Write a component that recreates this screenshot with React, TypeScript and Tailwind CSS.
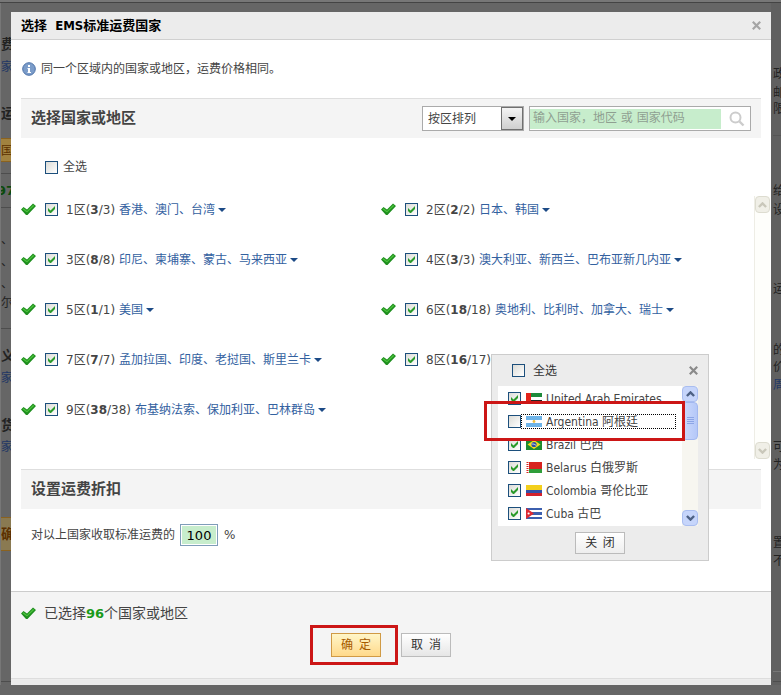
import type { ReactNode } from "react";

type Zone = {
  id: number;
  picked: number;
  total: number;
  names: string;
};

const zones: Zone[] = [
  { id: 1, picked: 3, total: 3, names: "香港、澳门、台湾" },
  { id: 2, picked: 2, total: 2, names: "日本、韩国" },
  { id: 3, picked: 8, total: 8, names: "印尼、柬埔寨、蒙古、马来西亚" },
  { id: 4, picked: 3, total: 3, names: "澳大利亚、新西兰、巴布亚新几内亚" },
  { id: 5, picked: 1, total: 1, names: "美国" },
  { id: 6, picked: 18, total: 18, names: "奥地利、比利时、加拿大、瑞士" },
  { id: 7, picked: 7, total: 7, names: "孟加拉国、印度、老挝国、斯里兰卡" },
  { id: 8, picked: 16, total: 17, names: "" },
  { id: 9, picked: 38, total: 38, names: "布基纳法索、保加利亚、巴林群岛" },
];

const flags: Record<string, ReactNode> = {
  ae: (
    <>
      <path fill="#fff" d="M0 0h16v11H0z" />
      <path fill="#1f8a3b" d="M0 0h16v4H0z" />
      <path fill="#222" d="M0 7h16v4H0z" />
      <path fill="#e2231a" d="M0 0h5v11H0z" />
    </>
  ),
  ar: (
    <>
      <path fill="#6fb4e8" d="M0 0h16v11H0z" />
      <path fill="#fff" d="M0 4h16v3H0z" />
      <circle cx="8" cy="5.5" r="1.4" fill="#f0c040" />
    </>
  ),
  br: (
    <>
      <path fill="#1d8a2f" d="M0 0h16v11H0z" />
      <path fill="#f5dc1e" d="m8 1 6.500 4.500L8 10 1.500 5.500z" />
      <circle cx="8" cy="5.500" r="2.600" fill="#2b4fa3" />
      <path stroke="#fff" strokeWidth=".7" fill="none" d="M5.600 5q2.600-.4 4.600 1.400" />
    </>
  ),
  by: (
    <>
      <path fill="#d8231f" d="M0 0h16v11H0z" />
      <path fill="#2f9e3a" d="M0 7h16v4H0z" />
      <path fill="#fff" d="M0 0h3v11H0z" />
      <path stroke="#d8231f" strokeWidth="2" strokeDasharray="1 1" d="M1.500 0v11" />
    </>
  ),
  co: (
    <>
      <path fill="#f3cf1c" d="M0 0h16v5H0z" />
      <path fill="#3351a8" d="M0 5h16v3H0z" />
      <path fill="#d3212c" d="M0 8h16v3H0z" />
    </>
  ),
  cu: (
    <>
      <path fill="#3c5fae" d="M0 0h16v11H0z" />
      <path fill="#fff" d="M0 2h16v2H0zM0 7h16v2H0z" />
      <path fill="#dd2a33" d="m0 0 8 5.500L0 11z" />
      <circle cx="2.600" cy="5.500" r="1.100" fill="#fff" />
    </>
  ),
};

const countries = [
  { code: "ae", name: "United Arab Emirates", checked: true },
  { code: "ar", name: "Argentina 阿根廷", checked: false },
  { code: "br", name: "Brazil 巴西", checked: true },
  { code: "by", name: "Belarus 白俄罗斯", checked: true },
  { code: "co", name: "Colombia 哥伦比亚", checked: true },
  { code: "cu", name: "Cuba 古巴", checked: true },
];

const CheckBox = ({ id, checked = false }: { id: string; checked?: boolean }) => (
  <span className="grid h-[13px] w-[13px] shrink-0">
    <input
      id={id}
      type="checkbox"
      defaultChecked={checked}
      className="peer col-start-1 row-start-1 h-[13px] w-[13px] appearance-none border border-[#1c4f7c] bg-linear-to-br from-[#dcdcd7] to-white"
    />
    <svg
      viewBox="0 0 13 13"
      className="pointer-events-none invisible col-start-1 row-start-1 h-[13px] w-[13px] peer-checked:visible"
    >
      <path fill="#2a9a2a" d="M3 5v3l2 2h1l4-4V3L5.500 7.500z" />
    </svg>
  </span>
);

const Tick = () => (
  <svg viewBox="0 0 15 13" className="h-[13px] w-[15px] shrink-0">
    <path fill="#1f8f1f" d="M0 6.500 2.500 4 6 6.500 12 .5 15 3 6.500 12 5 12z" />
    <path fill="#4cc23c" d="M1.500 6.200 2.600 5.200 6 8 12 2l1.300.8L6 9.600z" />
  </svg>
);

const Caret = ({ className }: { className: string }) => (
  <svg viewBox="0 0 8 4" className={`h-1 w-2 ${className}`}>
    <path fill="currentColor" d="M0 0h8L4 4z" />
  </svg>
);

const CloseIcon = ({ className }: { className: string }) => (
  <svg viewBox="0 0 9 9" className={`h-[9px] w-[9px] ${className}`}>
    <path stroke="currentColor" strokeWidth="2.200" d="m.8.8 7.400 7.400M8.200.8.8 8.200" />
  </svg>
);

const Chevron = ({ className }: { className: string }) => (
  <svg viewBox="0 0 9 6" className={`h-[6px] w-[9px] ${className}`}>
    <path stroke="currentColor" strokeWidth="2.400" fill="none" d="m.9 5 3.600-3.600L8.100 5" />
  </svg>
);

const SectionTitle = ({ title, children }: { title: string; children?: ReactNode }) => (
  <div className="mx-2.5 flex h-10 items-center justify-between border-t border-[#dedede] bg-[#f4f4f4] px-2.5">
    <h2 className="text-[15px] font-bold text-[#444]">{title}</h2>
    {children}
  </div>
);

const CountryPopup = () => (
  <div className="absolute top-2 left-[110px] z-10 w-[218px] border border-[#ccc] bg-[#ececec] px-1.5 font-['DejaVu_Sans_Condensed','Noto_Sans_CJK_SC',sans-serif]">
    <div className="flex h-[31px] items-center pl-3.5">
      <CheckBox id="popup-all" />
      <label htmlFor="popup-all" className="ml-2 flex-1 text-[#333]">
        全选
      </label>
      <button type="button" aria-label="关闭" className="mr-1">
        <CloseIcon className="text-[#8a8a8a]" />
      </button>
    </div>
    <div className="mr-1 flex h-[140px] overflow-hidden bg-white">
      <ul className="min-w-0 flex-1 pt-px">
        {countries.map((c) => (
          <li key={c.code} className="flex h-[23px] items-center pl-2.5">
            <CheckBox id={c.code} checked={c.checked} />
            <label
              htmlFor={c.code}
              className={`flex h-[15px] w-[155px] items-center gap-1 border border-dotted pl-1 whitespace-nowrap ${
                c.checked ? "border-transparent" : "border-black"
              }`}
            >
              <svg viewBox="0 0 16 11" className="h-[11px] w-4 shrink-0">
                {flags[c.code]}
              </svg>
              {c.name}
            </label>
          </li>
        ))}
      </ul>
      <div className="flex w-4 flex-col bg-[#f7f6f0]">
        <button
          type="button"
          aria-label="向上"
          className="grid h-4 place-items-center rounded-sm border border-[#a9bdf0] bg-[#c6d5fb]"
        >
          <Chevron className="text-[#4d6185]" />
        </button>
        <span className="grid h-[38px] place-items-center rounded-sm border border-[#a3b8ef] bg-linear-to-r from-[#cddafd] to-[#b5c8f8]">
          <svg viewBox="0 0 7 8" className="h-2 w-[7px]">
            <path stroke="#8ca5e6" d="M0 .5h7M0 2.500h7M0 4.500h7M0 6.500h7" />
          </svg>
        </span>
        <button
          type="button"
          aria-label="向下"
          className="mt-auto grid h-4 place-items-center rounded-sm border border-[#a9bdf0] bg-[#c6d5fb]"
        >
          <Chevron className="rotate-180 text-[#4d6185]" />
        </button>
      </div>
    </div>
    <div className="flex h-[34px] items-center justify-center">
      <button
        type="button"
        className="h-[22px] w-[50px] border border-[#bbb] bg-linear-to-b from-white to-[#eee] text-[#333]"
      >
        关&ensp;闭
      </button>
    </div>
    <div className="pointer-events-none absolute top-[46px] -left-2 h-10 w-[201px] border-[3px] border-[#cc1616]" />
  </div>
);

const ZoneItem = ({ zone }: { zone: Zone }) => (
  <li className="relative flex h-[27px] items-center whitespace-nowrap">
    <Tick />
    <span className="ml-[9px] flex items-center">
      <CheckBox id={`zone-${zone.id}`} checked />
      <label htmlFor={`zone-${zone.id}`} className="ml-2">
        {zone.id}区(<b>{zone.picked}</b>/{zone.total})
      </label>
    </span>
    {zone.names && (
      <a href="#" className="ml-1 flex items-center gap-[3px] text-[#33619f]">
        {zone.names}
        <Caret className="text-[#1c4a86]" />
      </a>
    )}
    {zone.id === 8 && <CountryPopup />}
  </li>
);

const PageLeft = () => (
  <aside className="w-[11px] shrink-0 overflow-hidden border-l border-[#777] leading-4 whitespace-nowrap text-[#222]">
    <p className="mt-[33px] text-sm leading-4 font-bold">费</p>
    <p className="mt-[7px] text-[#1f3765]">家</p>
    <p className="mt-[30px] text-sm leading-4 font-bold">运</p>
    <p className="mt-[17px] h-6 border-y border-[#8a6220] bg-[#a1823f] leading-6 text-[#5c3000]">国</p>
    <hr className="mt-[11px] border-[#4d4d4d]" />
    <p className="mt-[9px] -ml-1 text-[13px] leading-4 font-bold text-[#0c4a0c]">97</p>
    <hr className="mt-2 border-[#4d4d4d]" />
    <p className="mt-6">、</p>
    <p className="mt-1.5">、</p>
    <p className="mt-1.5">、</p>
    <p className="mt-[3px]">尔</p>
    <hr className="mt-[17px] border-[#4d4d4d]" />
    <p className="mt-[18px] text-sm leading-4 font-bold">义</p>
    <p className="mt-[7px] text-[#1f3765]">家</p>
    <p className="mt-[31px] text-sm leading-4 font-bold">货</p>
    <p className="mt-1.5 text-[#1f3765]">家</p>
    <p className="mt-[62px] h-[34px] border-y border-[#8a6220] bg-[#8a7a52] text-sm leading-8 font-bold text-[#5c3000]">
      确
    </p>
    <hr className="mt-[130px] border-[#4d4d4d]" />
  </aside>
);

const PageRight = () => (
  <aside className="w-2.5 shrink-0 overflow-hidden bg-[#606060] pl-0.5 leading-4 whitespace-nowrap text-[#222]">
    <p className="mt-[63px]">政</p>
    <p className="mt-[3px]">邮</p>
    <p>限</p>
    <hr className="mt-[18px] border-[#555]" />
    <p className="mt-[47px]">给</p>
    <p className="mt-[3px]">设</p>
    <p className="mt-[63px]">运</p>
    <p className="mt-[45px]">的</p>
    <p className="mt-px">价</p>
    <p className="mt-0.5 text-[#1f3765]">周</p>
    <p className="mt-[46px]">可</p>
    <p className="mt-0.5">为</p>
    <p className="mt-[62px]">置</p>
    <p className="mt-0.5">不</p>
    <hr className="mt-[102px] border-[#777]" />
    <hr className="mt-[9px] border-[#4d4d4d]" />
  </aside>
);

const App = () => {
  return (
    <div className="min-h-screen bg-[#666] font-['DejaVu_Sans','Noto_Sans_CJK_SC',sans-serif] text-xs text-[#444]">
      <div className="h-[3px] border-b border-[#444] bg-[#777]" />
      <div className="flex">
        <PageLeft />
        <main role="dialog" aria-labelledby="dialog-title" className="mt-[9px] min-w-0 flex-1 self-start bg-white">
          <header className="flex h-7 items-center justify-between border-b border-[#d0d0d0] bg-[#ececec] pr-2.5 pl-2.5">
            <h1
              id="dialog-title"
              className="font-['DejaVu_Sans_Condensed','Noto_Sans_CJK_SC',sans-serif] text-[13px] font-bold whitespace-pre text-black"
            >
              {"选择  EMS标准运费国家"}
            </h1>
            <button type="button" aria-label="关闭">
              <CloseIcon className="text-[#a5a5a5]" />
            </button>
          </header>

          <p className="flex h-[58px] items-center gap-[5px] pl-[11px]">
            <svg viewBox="0 0 14 14" className="h-3.5 w-3.5">
              <circle cx="7" cy="7" r="6.300" fill="#7b9cc9" stroke="#4d72a8" />
              <path fill="#fff" d="M6 3h2v2H6zM5.500 6H8v4h1v1H5.500v-1H6V7h-.5z" />
            </svg>
            同一个区域内的国家或地区，运费价格相同。
          </p>

          <SectionTitle title="选择国家或地区">
            <form className="flex gap-[5px]">
              <span className="grid h-[25px] w-[102px] items-center border border-[#aaa] bg-white">
                <select
                  aria-label="排列方式"
                  className="col-start-1 row-start-1 h-full w-full appearance-none bg-transparent pl-[5px] text-[#444]"
                >
                  <option>按区排列</option>
                </select>
                <span className="pointer-events-none col-start-1 row-start-1 grid h-[23px] w-[22px] place-items-center justify-self-end border border-[#707070] bg-linear-to-b from-[#f4f4f4] to-[#cfcfcf]">
                  <Caret className="text-black" />
                </span>
              </span>
              <span className="flex h-[25px] w-[222px] items-center border border-[#aaa] bg-white">
                <input
                  type="text"
                  aria-label="搜索国家"
                  placeholder="输入国家，地区 或 国家代码"
                  className="h-5 w-[191px] bg-[#c7edcc] pb-0.5 pl-[3px] placeholder:text-[#8f9f91]"
                />
                <button type="button" aria-label="搜索" className="ml-2">
                  <svg viewBox="0 0 16 16" className="h-4 w-4">
                    <circle cx="6.500" cy="6.500" r="5" fill="none" stroke="#ccc" strokeWidth="2" />
                    <path stroke="#ccc" strokeWidth="2.400" d="m10.500 10.500 4 4" />
                  </svg>
                </button>
              </span>
            </form>
          </SectionTitle>

          <div className="flex h-[58px] items-center gap-[5px] pl-[34px]">
            <CheckBox id="all" />
            <label htmlFor="all">全选</label>
          </div>

          <div className="flex pl-2.5">
            <ul className="grid min-w-0 flex-1 grid-cols-2 content-start gap-y-[23px] pr-[13px] pb-9">
              {zones.map((zone) => (
                <ZoneItem key={zone.id} zone={zone} />
              ))}
            </ul>
            <div className="mr-px flex w-4 flex-col justify-between border-l border-[#eeede5] bg-[#fefefb]">
              <button
                type="button"
                aria-label="向上"
                className="grid h-[17px] place-items-center rounded-sm border border-[#dddcd0] bg-[#f0efe7]"
              >
                <Chevron className="text-[#c9c7ba]" />
              </button>
              <button
                type="button"
                aria-label="向下"
                className="grid h-[17px] place-items-center rounded-sm border border-[#dddcd0] bg-[#f0efe7]"
              >
                <Chevron className="rotate-180 text-[#c9c7ba]" />
              </button>
            </div>
          </div>

          <div className="pt-2.5">
            <SectionTitle title="设置运费折扣" />
          </div>

          <div className="flex h-[52px] items-center pl-5">
            <label htmlFor="discount">对以上国家收取标准运费的</label>
            <input
              id="discount"
              type="text"
              defaultValue="100"
              className="mr-1.5 ml-[5px] h-[22px] w-[38px] border border-[#7f9db9] bg-[#c7edcc] text-center text-[13px] text-black ring-1 ring-white ring-inset"
            />
            %
          </div>

          <footer className="mt-[30px] border-t border-[#ccc] bg-[#f4f4f4]">
            <p className="flex h-[42px] items-center gap-2 pl-2.5 text-sm">
              <Tick />
              <span>
                已选择<b className="text-[13px] text-[#1a9a1a]">96</b>个国家或地区
              </span>
            </p>
            <div className="-mt-[9px] flex h-[53px] items-start justify-center pr-[21px]">
              <span className="flex h-10 w-[88px] items-center justify-center border-[3px] border-[#cc1616] pl-1">
                <button
                  type="button"
                  className="h-6 w-[50px] border border-[#d09a45] bg-linear-to-b from-[#fff6c8] to-[#ffd98a] text-[#a65a00]"
                >
                  确&ensp;定
                </button>
              </span>
              <button
                type="button"
                className="mt-2 ml-[3px] h-6 w-[50px] border border-[#bbb] bg-linear-to-b from-white to-[#e6e6e6] text-[#333]"
              >
                取&ensp;消
              </button>
            </div>
            <div className="h-[7px] border-t border-[#ddd] bg-[#ececec]" />
          </footer>
        </main>
        <PageRight />
      </div>
    </div>
  );
};

export default App;
